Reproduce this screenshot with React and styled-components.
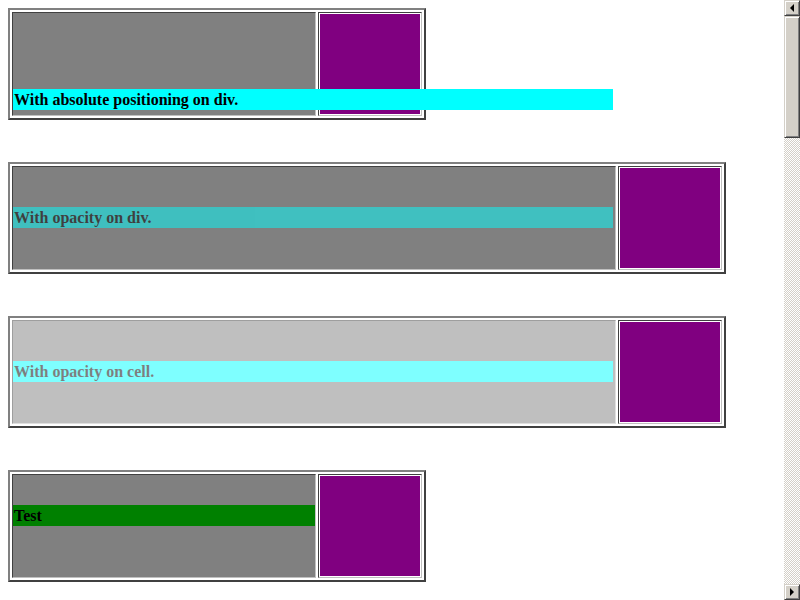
import React from "react";
import styled, { createGlobalStyle } from "styled-components";

const GlobalStyle = createGlobalStyle`
  html, body {
    margin: 0;
    padding: 0;
    background: #ffffff;
  }
  body {
    font-family: "Liberation Serif", "Times New Roman", serif;
    font-size: 16px;
  }
`;

const Page = styled.div`
  display: flex;
  width: 800px;
  height: 600px;
  overflow: hidden;
`;

const Main = styled.div`
  flex: 1;
  padding: 8px;
  display: flex;
  flex-direction: column;
  align-items: flex-start;
  gap: 42px;
`;

const TableWrap = styled.div`
  position: relative;
`;

const Table = styled.table`
  border-collapse: separate;
  border-spacing: 2px;
  border-style: solid;
  border-width: 2px;
  border-color: #808080 #404040 #404040 #808080;
`;

const Cell = styled.td`
  padding: ${(p) => (p.$pad ? "1px" : "0")};
  border-style: solid;
  border-width: 1px;
  border-color: #404040 #c0c0c0 #c0c0c0 #404040;
  vertical-align: middle;
  background: ${(p) => p.$bg || "transparent"};
  width: ${(p) => (p.$w ? `${p.$w}px` : "auto")};
  opacity: ${(p) => p.$opacity || 1};
`;

const Square = styled.div`
  width: 100px;
  height: 100px;
  background: #800080;
`;

const Bar = styled.div`
  box-sizing: border-box;
  width: ${(p) => (p.$w ? `${p.$w}px` : "100%")};
  padding-left: 1px;
  background: ${(p) => p.$bg};
  color: #000000;
  font-weight: 700;
  line-height: 21px;
  height: 21px;
  white-space: nowrap;
  opacity: ${(p) => p.$opacity || 1};
  margin-bottom: ${(p) => (p.$below ? `${p.$below}px` : "0")};
`;

const FloatingBar = styled(Bar)`
  position: absolute;
  left: 5px;
  top: 81px;
`;

const Scrollbar = styled.div`
  width: 16px;
  height: 600px;
  display: flex;
  flex-direction: column;
`;

const ScrollButton = styled.div`
  box-sizing: border-box;
  height: 16px;
  background: #d4d0c8;
  border-style: solid;
  border-width: 1px;
  border-color: #d4d0c8 #404040 #404040 #d4d0c8;
  box-shadow: inset 1px 1px #ffffff, inset -1px -1px #808080;
  display: flex;
  align-items: center;
  justify-content: center;
`;

const Arrow = styled.div`
  width: 0;
  height: 0;
  border-top: 4px solid transparent;
  border-bottom: 4px solid transparent;
  ${(p) =>
    p.$dir === "left"
      ? "border-right: 4px solid #000;"
      : "border-left: 4px solid #000;"}
`;

const Thumb = styled(ScrollButton)`
  height: 122px;
`;

const Track = styled.div`
  flex: 1;
  background: repeating-conic-gradient(#d4d0c8 0 25%, #ffffff 0 50%) 0 0 / 2px 2px;
`;

function TestTable({ children, grayWidth, grayOpacity }) {
  return (
    <Table>
      <tbody>
        <tr>
          <Cell $bg="#808080" $w={grayWidth} $opacity={grayOpacity}>
            {children}
          </Cell>
          <Cell $pad>
            <Square />
          </Cell>
        </tr>
      </tbody>
    </Table>
  );
}

export default function App() {
  return (
    <>
      <GlobalStyle />
      <Page>
        <Main>
          <TableWrap>
            <TestTable grayWidth={302} />
            <FloatingBar $w={600} $bg="#00ffff">
              With absolute positioning on div.
            </FloatingBar>
          </TableWrap>

          <TestTable grayWidth={602}>
            <Bar $w={600} $bg="#00ffff" $opacity={0.5} $below={2}>
              With opacity on div.
            </Bar>
          </TestTable>

          <TestTable grayWidth={602} grayOpacity={0.5}>
            <Bar $w={600} $bg="#00ffff" $below={2}>
              With opacity on cell.
            </Bar>
          </TestTable>

          <TestTable grayWidth={302}>
            <Bar $bg="#008000" $below={22}>
              Test
            </Bar>
          </TestTable>
        </Main>
        <Scrollbar>
          <ScrollButton>
            <Arrow $dir="left" />
          </ScrollButton>
          <Thumb />
          <Track />
          <ScrollButton>
            <Arrow $dir="right" />
          </ScrollButton>
        </Scrollbar>
      </Page>
    </>
  );
}
